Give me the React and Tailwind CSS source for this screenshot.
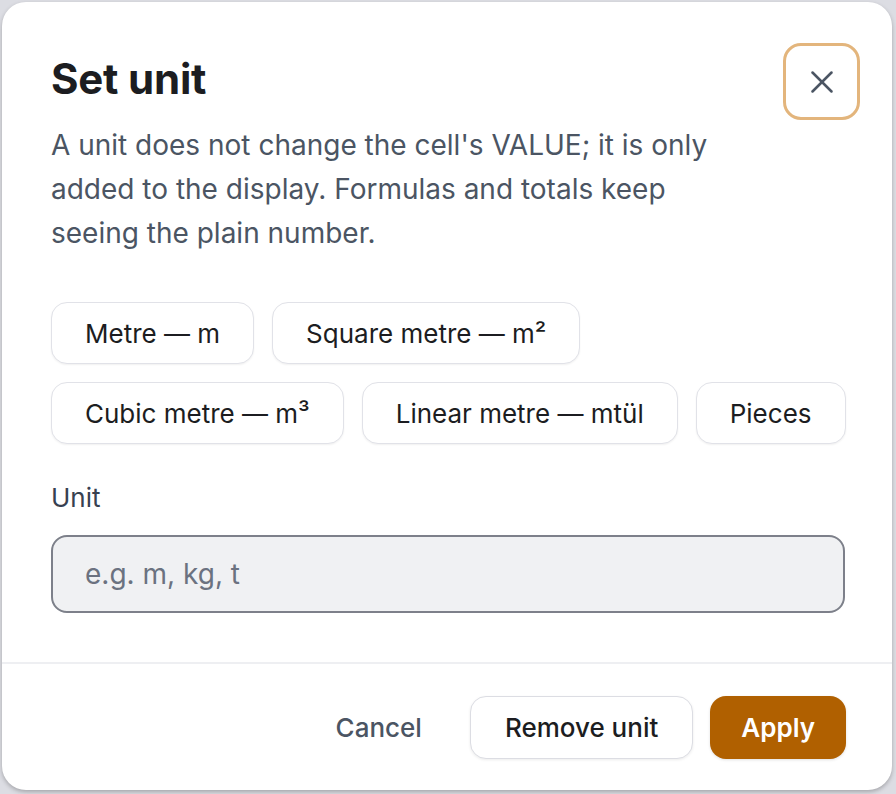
import { X } from 'lucide-react';

const PRESETS = [
  'Metre — m',
  'Square metre — m²',
  'Cubic metre — m³',
  'Linear metre — mtül',
  'Pieces',
];

export default function App() {
  return (
    <div
      className="min-h-[794px] bg-[#dcdde3] p-[2px]"
      style={{ fontFamily: 'Inter, "Noto Sans", sans-serif' }}
    >
      <div className="h-[788px] w-[890px] rounded-[24px] bg-white shadow-[0_2px_4px_rgba(0,0,0,0.25)] flex flex-col overflow-hidden">
        <div className="pl-[49px] pr-[47px] pt-[41px]">
          <div className="flex items-start gap-[48px]">
            <div className="flex-1 min-w-0">
              <h2 className="mt-[11px] text-[42px] leading-[50px] font-bold text-[#1c1d21] tracking-[-0.005em]">
                Set unit
              </h2>
              <p className="mt-[19px] text-[28px] leading-[44px] text-[#4b5563]">
                A unit does not change the cell's VALUE; it is only added to the display. Formulas and totals keep seeing the plain number.
              </p>
            </div>
            <button
              type="button"
              className="w-[77px] h-[77px] flex-shrink-0 flex items-center justify-center rounded-[18px] border-[3px] border-[#e3b57c] text-[#4b5563] -mr-[15px]"
            >
              <X className="w-[38px] h-[38px]" strokeWidth={1.6} />
            </button>
          </div>

          <div className="mt-[47px] flex flex-wrap gap-[18px] w-[800px]">
            {PRESETS.map((label) => (
              <button
                key={label}
                type="button"
                className="h-[62px] px-[33px] rounded-[16px] border-[1.5px] border-[#e1e2e8] bg-white text-[26px] text-[#1c1d21] shadow-[0_1px_2px_rgba(0,0,0,0.06)]"
              >
                {label}
              </button>
            ))}
          </div>

          <label htmlFor="unit" className="block mt-[36px] text-[26px] leading-[36px] text-[#374151]">
            Unit
          </label>
          <input
            id="unit"
            placeholder="e.g. m, kg, t"
            className="mt-[19px] w-full h-[78px] rounded-[16px] border-2 border-[#7d808a] bg-[#f0f1f3] px-[32px] text-[28px] text-[#1c1d21] placeholder:text-[#6b7280] outline-none"
          />
        </div>

        <div className="mt-[49px] border-t-2 border-[#eeeff2]" />

        <div className="flex justify-end items-center gap-[17px] px-[46px] pt-[32px]">
          <button type="button" className="h-[63px] px-[31px] text-[26px] font-medium text-[#4b5563]">
            Cancel
          </button>
          <button
            type="button"
            className="h-[63px] px-[34px] rounded-[16px] border-[1.5px] border-[#dcdde3] bg-white text-[26px] font-medium text-[#1c1d21] shadow-[0_1px_3px_rgba(0,0,0,0.08)]"
          >
            Remove unit
          </button>
          <button
            type="button"
            className="h-[63px] px-[31px] rounded-[16px] bg-[#b06000] text-[26px] font-semibold text-white shadow-[0_1px_3px_rgba(0,0,0,0.12)]"
          >
            Apply
          </button>
        </div>
      </div>
    </div>
  );
}
